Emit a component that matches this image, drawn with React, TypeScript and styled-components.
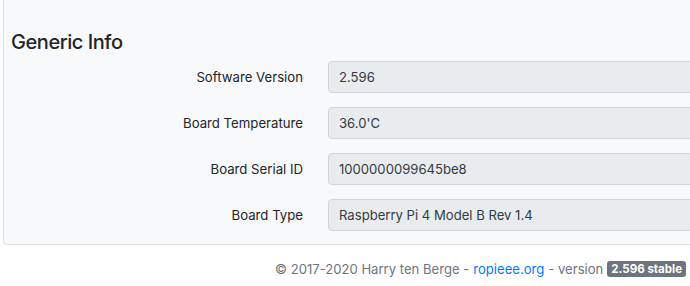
import React from "react";
import styled, { createGlobalStyle } from "styled-components";

const Global = createGlobalStyle`
  html, body { margin: 0; padding: 0; background: #fff; overflow: hidden; }
  body { font-family: Inter, "Liberation Sans", Arial, sans-serif; color: #212529; }
`;

const Page = styled.div`
  width: 690px;
  height: 286px;
  overflow: hidden;
`;

const Panel = styled.section`
  margin-left: 3px;
  margin-right: -20px;
  background: #f8f9fa;
  border: 1px solid #dfe2e5;
  border-top: none;
  border-radius: 0 0 4px 4px;
  padding: 30px 0 13px 7px;
`;

const Heading = styled.h4`
  margin: 0 0 6px;
  font-size: 20px;
  line-height: 25px;
  letter-spacing: -0.45px;
  font-weight: 500;
  color: #212529;
`;

const Rows = styled.div`
  display: flex;
  flex-direction: column;
  gap: 14px;
`;

const Row = styled.div`
  display: grid;
  grid-template-columns: 292px 1fr;
  align-items: center;
  column-gap: 25px;
`;

const Label = styled.label`
  text-align: right;
  font-size: 13.2px;
  color: #212529;
`;

const Value = styled.div`
  height: 32px;
  box-sizing: border-box;
  background: #e9ecef;
  border: 1px solid #ced4da;
  border-radius: 4px;
  padding: 0 10px;
  display: flex;
  align-items: center;
  font-size: 13.1px;
  color: #343a40;
`;

const Footer = styled.footer`
  display: flex;
  align-items: center;
  padding-left: 275px;
  margin-top: 16px;
  font-size: 13.1px;
  color: #6c757d;
  white-space: nowrap;
`;

const Link = styled.a`
  color: #007bff;
  text-decoration: none;
  margin: 0 4px;
`;

const Badge = styled.span`
  margin-left: 4px;
  background: #6c757d;
  color: #fff;
  font-weight: 700;
  font-size: 11.5px;
  line-height: 16px;
  padding: 0 4px;
  border-radius: 3px;
`;

const rows: [string, string][] = [
  ["Software Version", "2.596"],
  ["Board Temperature", "36.0'C"],
  ["Board Serial ID", "1000000099645be8"],
  ["Board Type", "Raspberry Pi 4 Model B Rev 1.4"],
];

export default function App() {
  return (
    <Page>
      <Global />
      <Panel>
        <Heading>Generic Info</Heading>
        <Rows>
          {rows.map(([k, v]) => (
            <Row key={k}>
              <Label>{k}</Label>
              <Value>{v}</Value>
            </Row>
          ))}
        </Rows>
      </Panel>
      <Footer>
        © 2017-2020 Harry ten Berge -<Link href="#">ropieee.org</Link>- version
        <Badge>2.596 stable</Badge>
      </Footer>
    </Page>
  );
}
